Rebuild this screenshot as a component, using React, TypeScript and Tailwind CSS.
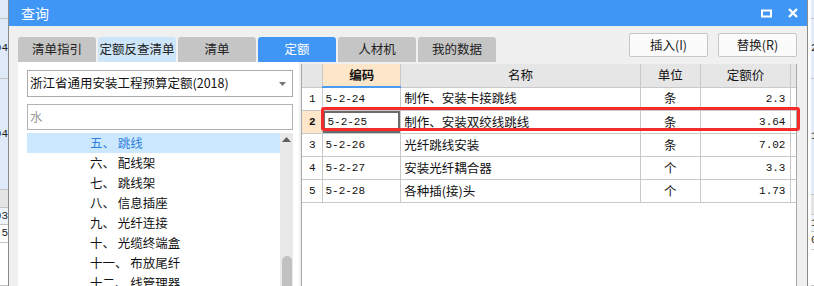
import React from "react";

const cjk = "font-['Microsoft_YaHei','Noto_Sans_CJK_SC',sans-serif]";
const mono = "font-['Liberation_Mono','DejaVu_Sans_Mono',monospace]";

const tabs = [
  { label: "清单指引", tone: "bg-[#c5c5c5] text-[#222]" },
  { label: "定额反查清单", tone: "bg-[#cde5f9] text-[#222]" },
  { label: "清单", tone: "bg-[#c5c5c5] text-[#222]" },
  { label: "定额", tone: "bg-[#4096f4] text-white" },
  { label: "人材机", tone: "bg-[#c5c5c5] text-[#222]" },
  { label: "我的数据", tone: "bg-[#c5c5c5] text-[#222]" },
];

const tree = [
  "五、 跳线",
  "六、 配线架",
  "七、 跳线架",
  "八、 信息插座",
  "九、 光纤连接",
  "十、 光缆终端盒",
  "十一、 布放尾纤",
  "十二、 线管理器",
];

const rows = [
  { n: 1, code: "5-2-24", name: "制作、安装卡接跳线", unit: "条", price: "2.3" },
  { n: 2, code: "5-2-25", name: "制作、安装双绞线跳线", unit: "条", price: "3.64" },
  { n: 3, code: "5-2-26", name: "光纤跳线安装", unit: "条", price: "7.02" },
  { n: 4, code: "5-2-27", name: "安装光纤耦合器", unit: "个", price: "3.3" },
  { n: 5, code: "5-2-28", name: "各种插(接)头", unit: "个", price: "1.73" },
];

export default function App() {
  return (
    <div className={`flex h-[286px] w-[814px] overflow-hidden bg-white text-[12px] ${cjk}`}>
      <BackStrip side="left" />
      <div className="flex w-[800px] shrink-0 flex-col border-x border-[#8c8c8c] bg-[#f0f0f0]">
        <TitleBar />
        <div className="flex items-start justify-between pl-[9px] pr-[10px] pt-[7px]">
          <div className="mt-[4px] flex gap-[2px]">
            {tabs.map((t) => (
              <div key={t.label} className={`flex h-[25px] w-[78px] items-center justify-center rounded-t-[3px] text-[12.5px] ${t.tone}`}>
                {t.label}
              </div>
            ))}
          </div>
          <div className="flex gap-[10px]">
            <Btn label="插入(I)" />
            <Btn label="替换(R)" />
          </div>
        </div>
        <div className="flex flex-1 pl-[9px]">
          <LeftPanel />
          <div className="ml-[2px] mt-[2px] flex-1 pr-[10px]">
            <Grid />
          </div>
        </div>
      </div>
      <BackStrip side="right" />
    </div>
  );
}

function TitleBar() {
  return (
    <div className="flex h-[26px] items-center justify-between bg-[#4096f4] pl-[12px] pr-[9px] text-[14px] text-white">
      <span>查询</span>
      <div className="flex items-center gap-[16px]">
        <svg width="11" height="9" viewBox="0 0 11 9">
          <rect x="1" y="1.5" width="9" height="6" fill="none" stroke="#fff" strokeWidth="2" />
        </svg>
        <svg width="10" height="10" viewBox="0 0 10 10">
          <path d="M1 1 L9 9 M9 1 L1 9" stroke="#fff" strokeWidth="2.4" />
        </svg>
      </div>
    </div>
  );
}

function Btn({ label }: { label: string }) {
  return (
    <div className="flex h-[24px] w-[79px] items-center justify-center rounded-[2px] border border-[#c6c6c6] bg-[#fbfbfb] text-[12.5px] text-[#222]">
      {label}
    </div>
  );
}

function LeftPanel() {
  return (
    <div className="flex h-[224px] w-[281px] flex-col bg-white pl-[9px] pr-[6px] pt-[8px]">
      <div className="flex h-[27px] items-center justify-between border border-[#ababab] pl-[2px] pr-[6px] text-[12.5px] text-[#111]">
        <span>浙江省通用安装工程预算定额(2018)</span>
        <svg width="7" height="4" viewBox="0 0 7 4">
          <path d="M0 0 H7 L3.5 4 Z" fill="#777" />
        </svg>
      </div>
      <div className="mt-[7px] flex h-[26px] items-center border border-[#b3b3b3] pl-[2px] text-[12.5px] text-[#9a9a9a]">水</div>
      <div className="mt-[3px] flex flex-1 overflow-hidden">
        <div className="flex-1">
          {tree.map((t, i) => (
            <div
              key={t}
              className={`flex h-[20px] items-center whitespace-pre pl-[63px] text-[12.5px] ${i === 0 ? "bg-[#cce8ff] text-[#2f7fdc]" : "text-[#111]"}`}
            >
              {t}
            </div>
          ))}
        </div>
        <div className="flex w-[13px] flex-col items-center justify-between bg-[#e9e9e9] pt-[4px]">
          <svg width="9" height="5" viewBox="0 0 9 5">
            <path d="M0 5 L4.5 0 L9 5 Z" fill="#606060" />
          </svg>
          <div className="h-[30px] w-[10px] rounded-t-[5px] bg-[#c1c1c1]" />
        </div>
      </div>
    </div>
  );
}

function Grid() {
  const line = "border-[#c9c9c9]";
  return (
    <div className="relative h-[222px] border-x border-[#a9a9a9] bg-white">
      <table className="table-fixed border-collapse text-[12.5px] text-[#111]">
        <colgroup>
          <col className="w-[21px]" />
          <col className="w-[78px]" />
          <col className="w-[240px]" />
          <col className="w-[60px]" />
          <col className="w-[91px]" />
          <col className="w-[5px]" />
        </colgroup>
        <thead>
          <tr className="h-[23px]">
            <th className={`border-r border-b ${line} bg-[#e6e6e6]`} />
            <th className={`border-r border-b-2 border-b-[#4a9bf0] border-r-[#c9c9c9] bg-[#fde6c9] font-bold`}>编码</th>
            <th className={`border-r border-b ${line} bg-[#e6e6e6] font-normal`}>名称</th>
            <th className={`border-r border-b ${line} bg-[#e6e6e6] font-normal`}>单位</th>
            <th className={`border-r border-b ${line} bg-[#e6e6e6] font-normal`}>定额价</th>
            <th className={`border-b ${line} bg-[#e6e6e6]`} />
          </tr>
        </thead>
        <tbody>
          {rows.map((r) => {
            const sel = r.n === 2;
            return (
              <tr key={r.n} className="h-[23px]">
                <td className={`border-r border-b ${line} text-center ${mono} text-[11px] ${sel ? "bg-[#fde6c9] font-bold" : ""}`}>{r.n}</td>
                <td className={`border-b border-r ${line} p-0`}>
                  <div className={`flex h-[22px] items-center pl-[2px] ${mono} text-[11px] ${sel ? "border-2 border-[#6b6b6b] pl-0" : ""}`}>{r.code}</div>
                </td>
                <td className={`border-r border-b ${line} pl-[3px]`}>{r.name}</td>
                <td className={`border-r border-b ${line} text-center`}>{r.unit}</td>
                <td className={`border-r border-b ${line} pr-[5px] text-right ${mono} text-[11px]`}>{r.price}</td>
                <td className={`border-b ${line}`} />
              </tr>
            );
          })}
        </tbody>
      </table>
      <div className="pointer-events-none absolute left-[19px] top-[43px] h-[24px] w-[479px] rounded-[3px] border-[3px] border-[#f52a2a]" />
    </div>
  );
}

function BackStrip({ side }: { side: "left" | "right" }) {
  const left = side === "left";
  const cells = left
    ? [
        { h: 19, bg: "bg-[#dfe9f8]", t: "" },
        { h: 60, bg: "bg-[#dfe9f8]", t: "04" },
        { h: 111, bg: "bg-[#dfe9f8]", t: "04" },
        { h: 18, bg: "bg-[#e4e4e4]", t: "" },
        { h: 17, bg: "bg-[#edf3fb]", t: "03" },
        { h: 18, bg: "bg-white", t: "| 5" },
        { h: 43, bg: "bg-white", t: "" },
      ]
    : [
        { h: 19, bg: "bg-[#e3ecf9]", t: "" },
        { h: 60, bg: "bg-[#e3ecf9]", t: "2" },
        { h: 116, bg: "bg-[#e3ecf9]", t: "1" },
        { h: 20, bg: "bg-[#e4e4e4]", t: "" },
        { h: 17, bg: "bg-[#edf3fb]", t: "1" },
        { h: 18, bg: "bg-white", t: "0" },
        { h: 36, bg: "bg-white", t: "" },
      ];
  return (
    <div className={`flex ${left ? "w-[8px]" : "w-[6px]"} shrink-0 flex-col overflow-hidden ${left ? "" : "pl-[3px]"}`}>
      {cells.map((c, i) => (
        <div
          key={i}
          className={`flex shrink-0 items-center overflow-hidden border-b border-[#c4c4c4] ${c.bg} ${mono} text-[11px] text-[#222] ${left ? "justify-end" : "justify-start"}`}
          style={{ height: c.h }}
        >
          <span className="whitespace-pre">{c.t}</span>
        </div>
      ))}
    </div>
  );
}
